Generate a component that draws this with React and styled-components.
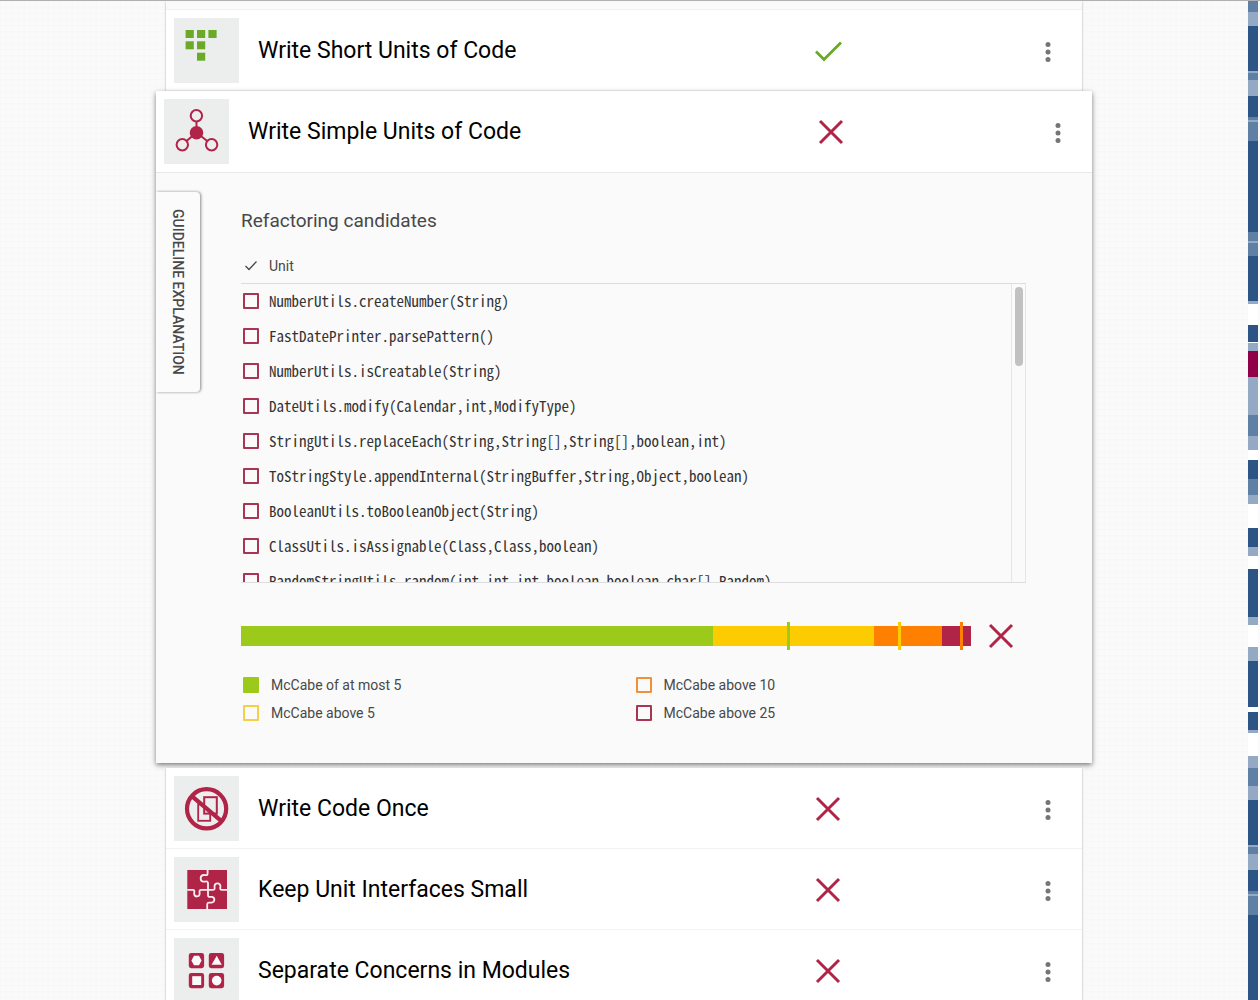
import React from "react";
import styled, { createGlobalStyle } from "styled-components";

const color = {
  page: "#fafafa",
  tile: "#eceded",
  crimson: "#b02448",
  pass: "#6aaa27",
  text: "#000000",
  muted: "#484848",
  line: "#dddddd",
  lime: "#9cca1a",
  yellow: "#fdcc00",
  orange: "#ff8000",
};

const GlobalStyle = createGlobalStyle`
  * { box-sizing: border-box; }
  body {
    margin: 0;
    background: ${color.page};
    font-family: Roboto, "Liberation Sans", sans-serif;
    color: ${color.text};
  }
`;

const Page = styled.div`
  display: flex;
  height: 100vh;
  overflow: hidden;
  border-top: 1px solid #b0b0b0;
  padding-right: 2px;
`;

const Main = styled.main`
  flex: 1;
  min-width: 0;
  background-color: ${color.page};
  background-image:
    linear-gradient(rgba(0, 0, 0, 0.008) 1px, transparent 1px),
    linear-gradient(90deg, rgba(0, 0, 0, 0.008) 1px, transparent 1px);
  background-size: 6px 6px;
`;

const Column = styled.div`
  max-width: 936px;
  margin: 0 auto;
`;

const CardGroup = styled.section`
  position: relative;
  margin: 0 10px;
  background: #fff;
  box-shadow: 0 1px 2px rgba(0, 0, 0, 0.35);
`;

const PreviousCard = styled.div`
  height: 9px;
  background: ${color.page};
  border-bottom: 1px solid #f0f0f0;
`;

const Row = styled.header`
  display: grid;
  grid-template-columns: 65px 13fr 7fr 68px;
  align-items: center;
  padding: 8px 0 ${(p) => (p.$open ? 8 : 7)}px 8px;
  border-bottom: 1px solid ${(p) => (p.$open ? "#e8e8e8" : "#f2f2f2")};
  background: #fff;
`;

const Tile = styled.div`
  width: 65px;
  height: 65px;
  background: ${color.tile};

  svg { display: block; }
`;

const Title = styled.h2`
  margin: 0;
  padding-left: 19px;
  font-size: 23px;
  line-height: 32px;
  font-weight: 400;
  white-space: nowrap;
`;

const Status = styled.div`
  padding-left: 70px;

  svg { display: block; }
`;

const MenuButton = styled.button`
  justify-self: center;
  display: flex;
  align-items: center;
  justify-content: center;
  width: 32px;
  height: 32px;
  padding: 0;
  border: 0;
  background: none;
  cursor: pointer;
`;

const OpenCard = styled.section`
  position: relative;
  margin-bottom: 5px;
  background: ${color.page};
  box-shadow: 0 2px 5px rgba(0, 0, 0, 0.5);
`;

const Body = styled.div`
  display: flex;
  align-items: flex-start;
  padding: 19px 66px 36px 0;
`;

const Tab = styled.button`
  flex: none;
  width: 44px;
  height: 200px;
  padding: 0;
  border: 0;
  border-radius: 0 4px 4px 0;
  background: #fbfbfb;
  box-shadow: 1px 0 3px rgba(0, 0, 0, 0.45);
  clip-path: inset(-4px -6px -4px 0);
  writing-mode: vertical-rl;
  font: 500 14px/20px Roboto, "Liberation Sans", sans-serif;
  color: ${color.muted};
  cursor: pointer;
`;

const Content = styled.div`
  flex: 1;
  min-width: 0;
  margin-left: 41px;
`;

const Heading = styled.h3`
  margin: 17px 0 0;
  font-size: 19px;
  line-height: 24px;
  font-weight: 400;
  color: ${color.muted};
`;

const ListHead = styled.div`
  display: flex;
  align-items: center;
  gap: 10px;
  margin-top: 15px;
  padding-left: 2px;
  height: 36px;
  border-bottom: 1px solid ${color.line};
  font-size: 14px;
  color: ${color.muted};
`;

const ListFrame = styled.div`
  display: flex;
  height: 299px;
  border-bottom: 1px solid ${color.line};
`;

const List = styled.ul`
  flex: 1;
  min-width: 0;
  margin: 0;
  padding: 0;
  list-style: none;
  overflow-y: auto;
  scrollbar-width: none;
`;

const Candidate = styled.label`
  display: flex;
  align-items: center;
  gap: 10px;
  height: 35px;
  padding: 0 0 1px 2px;
  font: 15px/16px "Noto Sans Mono CJK SC", "Noto Sans Mono CJK JP", "Liberation Mono", monospace;
  color: #333333;
  white-space: nowrap;
`;

const Check = styled.input`
  appearance: none;
  flex: none;
  width: 16px;
  height: 16px;
  margin: 0;
  border: 2px solid ${(p) => p.$color};
  border-radius: 1px;

  &:checked { background: ${(p) => p.$color}; }
`;

const Track = styled.div`
  width: 15px;
  padding: 3px;
  border: 1px solid #e6e6e6;
  border-width: 0 1px;
`;

const Thumb = styled.div`
  width: 8px;
  height: 79px;
  border-radius: 4px;
  background: #c1c1c1;
`;

const Rating = styled.div`
  display: flex;
  align-items: center;
  gap: 15px;
  margin-top: 38px;
  padding-right: 10px;

  svg { flex: none; }
`;

const Bar = styled.div`
  position: relative;
  flex: 1;
  display: flex;
  height: 20px;
`;

const Segment = styled.div`
  background: ${(p) => p.$color};
`;

const Marker = styled.div`
  position: absolute;
  top: -4px;
  bottom: -4px;
  width: 3px;
  background: ${(p) => p.$color};
`;

const Legend = styled.div`
  display: grid;
  grid-template-columns: 1fr 1fr;
  margin-top: 20px;
`;

const LegendItem = styled.label`
  display: flex;
  align-items: center;
  gap: 12px;
  height: 28px;
  padding-left: 2px;
  font-size: 14px;
  color: ${color.muted};
`;

const Strip = styled.aside`
  flex: none;
  display: flex;
  flex-direction: column;
  width: 10px;
`;

const Band = styled.div`
  background: ${(p) => p.$color};
`;

const PassIcon = () => (
  <svg width="30" height="30" viewBox="0 0 30 30" fill="none" role="img" aria-label="Passed">
    <path d="M3 15.5 11 23.5 28 6.5" stroke={color.pass} strokeWidth="2.8" />
  </svg>
);

const FailIcon = () => (
  <svg width="30" height="30" viewBox="0 0 30 30" fill="none" role="img" aria-label="Failed">
    <path d="M4 4 26 26M26 4 4 26" stroke={color.crimson} strokeWidth="3" />
  </svg>
);

const DotsIcon = () => (
  <svg width="6" height="24" viewBox="0 0 6 24" fill="#757575" aria-hidden="true">
    <circle cx="3" cy="5.5" r="2.5" />
    <circle cx="3" cy="13" r="2.5" />
    <circle cx="3" cy="20.5" r="2.5" />
  </svg>
);

const TickIcon = () => (
  <svg width="16" height="16" viewBox="0 0 16 16" fill="none" aria-hidden="true">
    <path d="M2.5 8 6 11.5 13.5 3.5" stroke={color.muted} strokeWidth="1.3" />
  </svg>
);

const BlocksIcon = () => (
  <svg width="65" height="65" viewBox="0 0 65 65" fill={color.pass} aria-hidden="true">
    {[[11.6, 12], [23, 12], [34.4, 12], [11.6, 23.3], [23, 23.3], [23, 34.7]].map(([x, y]) => (
      <rect key={`${x}-${y}`} x={x} y={y} width="8.2" height="8" />
    ))}
  </svg>
);

const NodesIcon = () => (
  <svg width="65" height="65" viewBox="0 0 65 65" fill="none" stroke={color.crimson} strokeWidth="2" aria-hidden="true">
    <path d="M32.5 22V33.5L22.5 42M32.5 33.5 43.2 42" />
    <circle cx="32.4" cy="16.8" r="5.7" />
    <circle cx="18.3" cy="45.8" r="5.7" />
    <circle cx="47.6" cy="45.8" r="5.7" />
    <circle cx="32.5" cy="33.8" r="5.8" fill={color.crimson} />
  </svg>
);

const NoCopyIcon = () => (
  <svg width="65" height="65" viewBox="0 0 65 65" fill={color.tile} stroke={color.crimson} aria-hidden="true">
    <rect x="24.2" y="28.4" width="12" height="16.4" strokeWidth="1.8" />
    <rect x="30.2" y="21.2" width="12.6" height="16.4" strokeWidth="2" />
    <circle cx="32.6" cy="32.8" r="19.6" strokeWidth="4.2" fill="none" />
    <path d="M17.5 19.8 47.8 45.4" strokeWidth="4.2" />
  </svg>
);

const PuzzleIcon = () => (
  <svg width="65" height="65" viewBox="0 0 65 65" fill="none" aria-hidden="true">
    <rect x="13.3" y="13" width="39.7" height="39" fill={color.crimson} />
    <g stroke="#f8eef0" strokeWidth="1.8">
      <path d="M33.6 13V16.6C33.6 19.2 31.4 17.8 29.4 18C25.6 18.6 25.8 24.4 29.6 24.6C31.4 24.8 34 23.4 34 26.2V38.2C34 41 36.6 39.6 38 39.8C41.4 40.4 41 45.2 37.6 45.6C35.6 45.8 33.2 44.8 33.2 47.6V52" />
      <path d="M13.3 32.8H18.6C21.4 32.8 20 35.2 20.2 37C20.8 40.4 25.2 40.2 25.6 37C25.8 35 24.6 32.8 27.4 32.8H38.6C41.8 32.8 40.2 30.6 40.6 28.6C41.2 25.4 46 25.6 46.4 28.8C46.6 30.6 45.2 32.8 48 32.8H53" />
    </g>
  </svg>
);

const ModulesIcon = () => (
  <svg width="65" height="65" viewBox="0 0 65 65" fill={color.crimson} aria-hidden="true">
    {[[14.8, 15], [34.8, 15], [14.8, 35], [34.8, 35]].map(([x, y]) => (
      <rect key={`${x}-${y}`} x={x} y={y} width="15.3" height="15.2" rx="2.4" />
    ))}
    <g fill="#fafafa">
      <path d="M20 17.8H25L27.6 22.5 25 27.2H20L17.4 22.5Z" />
      <path d="M42.7 17.8 47.8 26.8H37.6Z" />
      <rect x="18.2" y="38.2" width="9" height="8.8" />
      <circle cx="42.7" cy="42.6" r="4.8" />
    </g>
  </svg>
);

function GuidelineRow({ title, icon, passed, open }) {
  return (
    <Row $open={open}>
      <Tile>{icon}</Tile>
      <Title>{title}</Title>
      <Status>{passed ? <PassIcon /> : <FailIcon />}</Status>
      <MenuButton type="button" aria-label={`Options for ${title}`}>
        <DotsIcon />
      </MenuButton>
    </Row>
  );
}

const candidates = [
  "NumberUtils.createNumber(String)",
  "FastDatePrinter.parsePattern()",
  "NumberUtils.isCreatable(String)",
  "DateUtils.modify(Calendar,int,ModifyType)",
  "StringUtils.replaceEach(String,String[],String[],boolean,int)",
  "ToStringStyle.appendInternal(StringBuffer,String,Object,boolean)",
  "BooleanUtils.toBooleanObject(String)",
  "ClassUtils.isAssignable(Class,Class,boolean)",
  "RandomStringUtils.random(int,int,int,boolean,boolean,char[],Random)",
];

const segments = [
  { share: 472, color: color.lime },
  { share: 161, color: color.yellow },
  { share: 68, color: color.orange },
  { share: 29, color: color.crimson },
];

const markers = [
  { at: 74.8, color: color.lime },
  { at: 90, color: color.yellow },
  { at: 98.5, color: color.orange },
];

const legend = [
  { label: "McCabe of at most 5", color: color.lime, checked: true },
  { label: "McCabe above 10", color: "#f0913a" },
  { label: "McCabe above 5", color: "#f3cf4a" },
  { label: "McCabe above 25", color: "#a83553" },
];

const shades = { D: "#2c5484", M: "#5f7fa5", L: "#94a9c4", W: "#ffffff", R: "#8f0048" };

const bands =
  "M11 L14 D45 L2 M7 L16 D21 M3 L2 M19 D91 M9 L2 M13 D45 L3 W21 D17 W1 L8 R26 L38 M21 L14 W10 D19 M16 L9 W24 D19 L9 W13 D48 L8 W22 L14 D46 W5 D18 L3 W23 L12 M18 L14 D45 L2 M7 L16 D21 M3 L2 M19 D85"
    .split(" ")
    .map((band) => ({ shade: shades[band[0]], size: Number(band.slice(1)) }));

export default function App() {
  return (
    <>
      <GlobalStyle />
      <Page>
        <Main>
          <Column>
            <CardGroup>
              <PreviousCard />
              <GuidelineRow title="Write Short Units of Code" icon={<BlocksIcon />} passed />
            </CardGroup>

            <OpenCard>
              <GuidelineRow title="Write Simple Units of Code" icon={<NodesIcon />} open />
              <Body>
                <Tab type="button">GUIDELINE EXPLANATION</Tab>
                <Content>
                  <Heading>Refactoring candidates</Heading>
                  <ListHead>
                    <TickIcon />
                    Unit
                  </ListHead>
                  <ListFrame>
                    <List>
                      {candidates.map((name) => (
                        <li key={name}>
                          <Candidate>
                            <Check type="checkbox" $color="#a83553" />
                            {name}
                          </Candidate>
                        </li>
                      ))}
                    </List>
                    <Track>
                      <Thumb />
                    </Track>
                  </ListFrame>
                  <Rating>
                    <Bar>
                      {segments.map((s) => (
                        <Segment key={s.color} $color={s.color} style={{ flexGrow: s.share }} />
                      ))}
                      {markers.map((m) => (
                        <Marker key={m.color} $color={m.color} style={{ left: `${m.at}%` }} />
                      ))}
                    </Bar>
                    <FailIcon />
                  </Rating>
                  <Legend>
                    {legend.map((item) => (
                      <LegendItem key={item.label}>
                        <Check type="checkbox" defaultChecked={item.checked} $color={item.color} />
                        {item.label}
                      </LegendItem>
                    ))}
                  </Legend>
                </Content>
              </Body>
            </OpenCard>

            <CardGroup>
              <GuidelineRow title="Write Code Once" icon={<NoCopyIcon />} />
              <GuidelineRow title="Keep Unit Interfaces Small" icon={<PuzzleIcon />} />
              <GuidelineRow title="Separate Concerns in Modules" icon={<ModulesIcon />} />
            </CardGroup>
          </Column>
        </Main>
        <Strip>
          {bands.map((band, i) => (
            <Band key={i} $color={band.shade} style={{ flexGrow: band.size }} />
          ))}
        </Strip>
      </Page>
    </>
  );
}
